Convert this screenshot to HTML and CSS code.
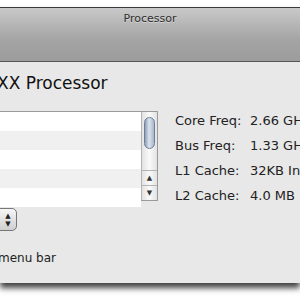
FILE: index.html
```html
<!DOCTYPE html>
<html lang="en">
  <head>
    <meta charset="UTF-8" />
    <title>Processor</title>
    <link rel="stylesheet" href="styles.css">
  </head>
  <body>
    <div class="window">
      <div class="titlebar">Processor</div>
      <div class="content">
        <h1 class="heading">XX Processor</h1>

        <div class="main-row">
          <div class="list">
            <div class="rows">
              <div class="row"></div>
              <div class="row alt"></div>
              <div class="row"></div>
              <div class="row alt"></div>
              <div class="row"></div>
            </div>
            <div class="scrollbar">
              <div class="thumb"></div>
              <div class="track"></div>
              <div class="arrow">&#9650;</div>
              <div class="arrow">&#9660;</div>
            </div>
          </div>

          <div class="specs">
            <div class="spec"><span class="label">Core Freq:</span><span class="value">2.66 GHz</span></div>
            <div class="spec"><span class="label">Bus Freq:</span><span class="value">1.33 GHz</span></div>
            <div class="spec"><span class="label">L1 Cache:</span><span class="value">32KB Instruction</span></div>
            <div class="spec"><span class="label">L2 Cache:</span><span class="value">4.0 MB</span></div>
          </div>
        </div>

        <div class="popup">
          <span class="popup-arrows">&#9650;<br>&#9660;</span>
        </div>

        <div class="option">menu bar</div>
      </div>
    </div>
  </body>
</html>
```

FILE: styles.css
```css
html, body {
  width: 300px;
  height: 300px;
}
body {
  margin: 0;
  padding: 0;
  background-color: #ffffff;
  font-family: "DejaVu Sans", sans-serif;
  overflow: hidden;
}
.window {
  margin-top: 7px;
  width: 300px;
  border-top: 1px solid #3a3a3a;
  box-shadow: 0 5px 6px rgba(0, 0, 0, 0.75);
}
.titlebar {
  height: 54px;
  box-sizing: border-box;
  padding-top: 4px;
  text-align: center;
  font-size: 11px;
  color: #2e2e2e;
  text-shadow: 0 1px 0 rgba(255, 255, 255, 0.4);
  background: linear-gradient(#c9c9c9, #a4a4a4 60%, #9c9c9c);
  border-bottom: 1px solid #555;
}
.content {
  background-color: #e8e8e8;
  height: 221px;
  box-sizing: border-box;
  padding-top: 10px;
  overflow: hidden;
}
.heading {
  margin: 0 0 0 -3px;
  font-size: 17px;
  font-weight: normal;
  line-height: 22px;
  color: #111;
  white-space: nowrap;
}
.main-row {
  display: flex;
  align-items: flex-start;
  height: 90px;
  margin-top: 17px;
}
.list {
  display: flex;
  flex: none;
  width: 200px;
  height: 90px;
  margin-left: -42px;
  border: 1px solid #9a9a9a;
  box-sizing: border-box;
  background: #fff;
}
.rows {
  flex: 1;
}
.row {
  height: 19px;
  background: #fff;
}
.row.alt {
  background: #f0f0f0;
}
.scrollbar {
  width: 15px;
  border-left: 1px solid #b4b4b4;
  display: flex;
  flex-direction: column;
  background: linear-gradient(90deg, #e2e2e2, #fafafa 50%, #e2e2e2);
}
.thumb {
  margin: 5px 2px 0 2px;
  height: 30px;
  border-radius: 6px;
  border: 1px solid #6f7f96;
  background: linear-gradient(90deg, #8d9db6, #dbe3ef 45%, #a8b6cb);
}
.track {
  flex: 1;
}
.arrow {
  height: 14px;
  border-top: 1px solid #b4b4b4;
  font-size: 7px;
  line-height: 14px;
  text-align: center;
  color: #333;
}
.specs {
  flex: none;
  margin-left: 17px;
  margin-top: -3px;
  font-size: 13px;
  color: #222;
}
.spec {
  display: flex;
  height: 25px;
  align-items: center;
  white-space: nowrap;
}
.label {
  width: 75px;
}
.popup {
  flex: none;
  margin-top: 7px;
  margin-left: -40px;
  width: 57px;
  height: 23px;
  box-sizing: border-box;
  border: 1px solid #777;
  border-radius: 5px;
  background: linear-gradient(#f6f6f6, #cfcfcf);
  display: flex;
  justify-content: flex-end;
  align-items: center;
}
.popup-arrows {
  width: 16px;
  font-size: 7px;
  line-height: 8px;
  text-align: center;
  color: #222;
}
.option {
  margin-top: 20px;
  margin-left: -2px;
  font-size: 12px;
  line-height: 14px;
  color: #222;
  white-space: nowrap;
}
```
